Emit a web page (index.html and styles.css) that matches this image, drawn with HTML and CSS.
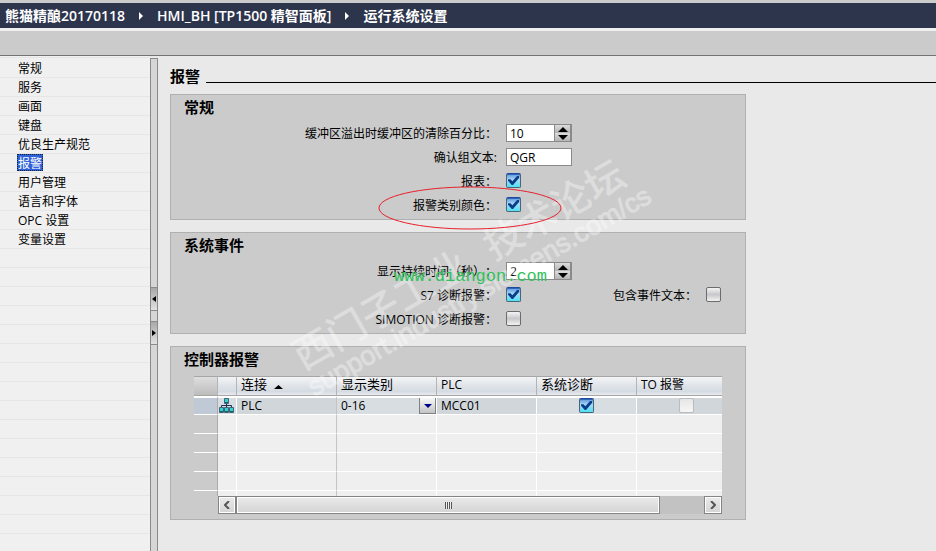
FILE: index.html
```html
<!DOCTYPE html>
<html lang="zh-CN">
<head>
    <meta charset="UTF-8">
    <meta name="viewport" content="width=device-width, initial-scale=1.0">
    <title>运行系统设置</title>
    <link rel="stylesheet" href="styles.css">
</head>
<body>
    <header class="breadcrumb">
        <span>熊猫精酿20170118</span>
        <i class="crumb-arrow"></i>
        <span>HMI_BH [TP1500 精智面板]</span>
        <i class="crumb-arrow"></i>
        <span>运行系统设置</span>
    </header>
    <div class="toolbar"></div>

    <div class="workspace">
        <nav class="sidebar">
            <a href="#">常规</a>
            <a href="#">服务</a>
            <a href="#">画面</a>
            <a href="#">键盘</a>
            <a href="#">优良生产规范</a>
            <a href="#" class="selected">报警</a>
            <a href="#">用户管理</a>
            <a href="#">语言和字体</a>
            <a href="#">OPC 设置</a>
            <a href="#">变量设置</a>
        </nav>

        <div class="splitter">
            <button class="split-btn" aria-label="折叠"><svg width="4" height="6"><path d="M4 0v6L0 3z"/></svg></button>
            <button class="split-btn" aria-label="展开"><svg width="4" height="6"><path d="M0 0v6l4-3z"/></svg></button>
        </div>

        <main class="content">
            <h1 class="page-title">报警</h1>

            <section class="panel">
                <h2>常规</h2>
                <div class="form">
                    <label for="buffer">缓冲区溢出时缓冲区的清除百分比：</label>
                    <div class="spin">
                        <input type="text" id="buffer" value="10">
                        <div class="spin-buttons">
                            <button aria-label="增加"><svg width="10" height="5"><path d="M0 5h10L5 0z"/></svg></button>
                            <button aria-label="减少"><svg width="10" height="5"><path d="M0 0h10L5 5z"/></svg></button>
                        </div>
                    </div>
                    <label for="group">确认组文本:</label>
                    <input type="text" id="group" class="text" value="QGR">
                    <label for="report">报表：</label>
                    <input type="checkbox" id="report" checked>
                    <label for="colors">报警类别颜色：</label>
                    <input type="checkbox" id="colors" checked>
                </div>
            </section>

            <section class="panel">
                <h2>系统事件</h2>
                <div class="form">
                    <label for="duration">显示持续时间（秒）：</label>
                    <div class="spin">
                        <input type="text" id="duration" value="2">
                        <div class="spin-buttons">
                            <button aria-label="增加"><svg width="10" height="5"><path d="M0 5h10L5 0z"/></svg></button>
                            <button aria-label="减少"><svg width="10" height="5"><path d="M0 0h10L5 5z"/></svg></button>
                        </div>
                    </div>
                    <label for="s7">S7 诊断报警：</label>
                    <input type="checkbox" id="s7" checked>
                    <label for="eventtext" class="second">包含事件文本：</label>
                    <input type="checkbox" id="eventtext">
                    <label for="simotion">SIMOTION 诊断报警：</label>
                    <input type="checkbox" id="simotion">
                </div>
            </section>

            <section class="panel">
                <h2>控制器报警</h2>
                <div class="grid">
                    <table>
                        <colgroup>
                            <col class="c-head"><col class="c-icon"><col class="c-wide"><col class="c-wide"><col class="c-wide"><col class="c-wide"><col>
                        </colgroup>
                        <thead>
                            <tr>
                                <th class="corner"></th>
                                <th></th>
                                <th>连接 <svg class="sort" width="9" height="4"><path d="M0 4h9L4.500 0z"/></svg></th>
                                <th>显示类别</th>
                                <th class="latin">PLC</th>
                                <th>系统诊断</th>
                                <th class="latin">TO 报警</th>
                            </tr>
                        </thead>
                        <tbody>
                            <tr class="active">
                                <td></td>
                                <td class="icon">
                                    <svg width="15" height="15" viewBox="0 0 15 15">
                                        <path d="M7.500 5v3M2.500 10V7.500h10V10M7.500 7v3" fill="none" stroke="#1b2a55"/>
                                        <path d="M5.500.5h4v5h-4zM.5 9.500h4v5h-4zM5.500 9.500h4v5h-4zM10.500 9.500h4v5h-4z" fill="#2fd3d3" stroke="#47636f"/>
                                        <path d="M6 4.500h3M1 13.500h3M6 13.500h3M11 13.500h3" stroke="#0c6478"/>
                                    </svg>
                                </td>
                                <td>PLC</td>
                                <td class="choice">
                                    <div class="dropdown">
                                        <select aria-label="显示类别"><option>0-16</option></select>
                                        <span class="drop-btn"><svg width="8" height="4"><path d="M0 0h8L4 4z"/></svg></span>
                                    </div>
                                </td>
                                <td>MCC01</td>
                                <td class="check"><input type="checkbox" aria-label="系统诊断" checked></td>
                                <td class="check"><input type="checkbox" aria-label="TO 报警" disabled></td>
                            </tr>
                            <tr><td></td><td></td><td></td><td></td><td></td><td></td><td></td></tr>
                            <tr><td></td><td></td><td></td><td></td><td></td><td></td><td></td></tr>
                            <tr><td></td><td></td><td></td><td></td><td></td><td></td><td></td></tr>
                            <tr><td></td><td></td><td></td><td></td><td></td><td></td><td></td></tr>
                            <tr class="last"><td></td><td></td><td></td><td></td><td></td><td></td><td></td></tr>
                        </tbody>
                    </table>
                    <div class="scrollbar">
                        <button aria-label="向左"><svg width="6" height="8"><path d="M5 0L1 4l4 4" fill="none" stroke="#555" stroke-width="2"/></svg></button>
                        <div class="track"><div class="thumb"><i class="grip"></i></div></div>
                        <button aria-label="向右"><svg width="6" height="8"><path d="M1 0l4 4-4 4" fill="none" stroke="#555" stroke-width="2"/></svg></button>
                    </div>
                </div>
            </section>
        </main>
    </div>

    <svg class="overlay" width="936" height="551">
        <g class="forum" transform="translate(303 371) rotate(-30)">
            <text class="forum-name" x="0" y="0">西门子工业</text>
            <text class="forum-name" x="220" y="0">技术论坛</text>
            <text class="forum-url" x="-3" y="28">support.industry.siemens.com/cs</text>
        </g>
        <text class="site" x="394" y="281">www.diangon.com</text>
        <ellipse cx="470" cy="208" rx="91" ry="21" fill="none" stroke="#e8202c"/>
    </svg>
</body>
</html>
```
FILE: styles.css
```css
* {
    margin: 0;
    padding: 0;
    box-sizing: border-box;
}

body {
    font-family: "Open Sans", "Noto Sans CJK SC", sans-serif;
    font-size: 12px;
    color: #000;
    background-color: #e9e9e9;
    min-height: 100vh;
    display: flex;
    flex-direction: column;
    overflow: hidden;
    text-spacing-trim: space-all;
}

input,
select,
button {
    font: inherit;
    color: inherit;
    border: none;
    border-radius: 0;
    appearance: none;
}

button {
    cursor: pointer;
}

svg {
    display: block;
}

/* top bars */
.breadcrumb {
    display: flex;
    align-items: center;
    gap: 14px;
    height: 31px;
    padding-left: 5px;
    background-color: #2d354d;
    border-top: 3px solid #cbcbcb;
    border-bottom: 3px solid #efefef;
    color: #fff;
    font-size: 14px;
    font-weight: 600;
    line-height: 24px;
    white-space: nowrap;
}

.crumb-arrow {
    border: 4px solid transparent;
    border-left-color: #fff;
    border-right-width: 0;
}

.toolbar {
    height: 25px;
    background-color: #cbcbcb;
    border-bottom: 1px solid #747474;
}

.workspace {
    flex: 1;
    display: flex;
}

/* left navigation */
.sidebar {
    width: 150px;
    padding: 3px 0 0 17px;
    display: flex;
    flex-direction: column;
    align-items: flex-start;
    gap: 2px;
    background: repeating-linear-gradient(#f0f0f0 0 18px, #e6e6e6 18px 19px) 0 3px;
}

.sidebar a {
    height: 17px;
    line-height: 19px;
    padding: 0 1px;
    color: #000;
    text-decoration: none;
}

.sidebar a.selected {
    background-color: #2f62d9;
    outline: 1px dotted #123;
    outline-offset: -1px;
    color: #fff;
}

.splitter {
    width: 8px;
    margin-top: 2px;
    padding-top: 22px;
    display: flex;
    flex-direction: column;
    justify-content: center;
    gap: 10px;
    background-color: #d6d6d6;
    border: 1px solid #8a8a8a;
    border-bottom: none;
}

.split-btn {
    height: 24px;
    display: flex;
    align-items: center;
    justify-content: center;
    background: linear-gradient(#a8a8a8, #e2e2e2);
    border: 1px solid #8a8a8a;
    border-width: 1px 0;
}

/* main area */
.content {
    flex: 1;
    padding: 8px 0 0 12px;
}

.page-title {
    display: flex;
    align-items: center;
    gap: 6px;
    height: 22px;
    margin-bottom: 8px;
    font-size: 15px;
}

.page-title::after {
    content: "";
    flex: 1;
    height: 1px;
    margin-top: 15px;
    background-color: #000;
}

.panel {
    max-width: 576px;
    margin-bottom: 12px;
    padding-bottom: 2px;
    background-color: #cbcbcb;
    border: 1px solid #b0b0b0;
}

.panel h2 {
    height: 26px;
    line-height: 24px;
    padding-left: 13px;
    font-size: 15px;
}

.form {
    display: grid;
    grid-template-columns: 325px 66px 116px 15px;
    grid-auto-rows: 24px;
    column-gap: 9px;
    padding-left: 1px;
    align-items: center;
}

.form label {
    grid-column: 1;
    text-align: right;
    white-space: nowrap;
}

.form label.second {
    grid-column: 3;
}

.text,
.spin {
    height: 18px;
    background-color: #fff;
    border: 1px solid #8a8a8a;
}

.text {
    width: 100%;
    padding: 0 3px;
}

.spin {
    display: flex;
}

.spin input {
    flex: 1;
    min-width: 0;
    padding: 0 3px;
    background-color: #fff;
}

.spin-buttons {
    width: 17px;
    display: flex;
    flex-direction: column;
    background-color: #d0d0d0;
    border: 1px solid #8a8a8a;
    border-width: 0 1px 0 1px;
}

.spin-buttons button {
    flex: 1;
    display: flex;
    align-items: center;
    justify-content: center;
    background: linear-gradient(#dcdcdc, #b4b4b4);
}

input[type="checkbox"] {
    display: block;
    position: relative;
    width: 15px;
    height: 15px;
    background: linear-gradient(#f4f4f4, #c8c8cc 50%, #f2f2f2);
    border: 1px solid #6c6c6c;
    border-radius: 2px;
}

input[type="checkbox"]:checked {
    background: linear-gradient(#5f94dc, #a5dcf6 45%, #4fe0f2);
    border-color: #1c4c98 #4b6478 #4b6478;
    box-shadow: inset 0 1px #2f66bc;
}

input[type="checkbox"]:checked::after {
    content: "";
    position: absolute;
    inset: 2px 1px;
    background-color: #0c3c8c;
    clip-path: polygon(0 35%, 22% 35%, 40% 58%, 82% 0, 100% 0, 100% 22%, 46% 100%, 34% 100%, 0 52%);
}

input[type="checkbox"]:disabled {
    background: linear-gradient(#e6e6e6, #f6f6f6);
    border-color: #bbb;
}

.form input[type="checkbox"] {
    margin-bottom: 1px;
}

/* controller alarms table */
.grid {
    margin: 3px 23px 3px 23px;
}

table {
    width: 100%;
    table-layout: fixed;
    border-collapse: separate;
    border-spacing: 0;
}

.c-head {
    width: 24px;
}

.c-icon {
    width: 19px;
}

.c-wide {
    width: 100px;
}

th {
    height: 20px;
    padding-left: 4px;
    background: linear-gradient(#f3f4f6, #dfe3e8 50%, #d5dbe2 80%, #e8ebee);
    border-top: 1px solid #a6a6a6;
    border-bottom: 1px solid #a6a6a6;
    border-right: 1px solid #b4b4b4;
    font-size: 13px;
    font-weight: normal;
    line-height: 14px;
    text-align: left;
    vertical-align: top;
    white-space: nowrap;
}

th.latin {
    font-size: 12px;
    line-height: 16px;
}

th.corner {
    background: linear-gradient(#dedede, #bdbdbd);
}

th:last-child {
    border-right: none;
}

.sort {
    display: inline-block;
    margin-left: 4px;
}

td {
    height: 19px;
    padding-left: 4px;
    background-color: #efefef;
    border-bottom: 1px solid #fff;
    border-right: 1px solid #fff;
    line-height: 17px;
}

td:nth-child(1) {
    background-color: #cbcbcb;
    border-right-color: #aaa;
}

td:nth-child(3) {
    border-right-color: #c4c4c4;
}

td:last-child {
    border-right: none;
}

.active td {
    background-color: #d8dde1;
    border-top: 2px solid #fff;
    line-height: 15px;
    vertical-align: top;
}

.active td:nth-child(odd) {
    background-color: #d0d6da;
}

.active td:nth-child(1) {
    background-color: #c0cad6;
}

.last td {
    height: 5px;
    border-bottom: none;
}

td.icon {
    padding-left: 1px;
}

td.choice {
    padding-left: 0;
}

td.check {
    padding-left: 0;
}

.check input {
    margin: 0 auto;
}

/* the last column is cut off, so its box keeps to a full column's centre */
.check:last-child input {
    margin: 0 0 0 42px;
}

.dropdown {
    display: grid;
    grid-template-columns: 1fr 17px;
    height: 16px;
}

.dropdown select {
    grid-area: 1 / 1 / 2 / 3;
    height: 15px;
    padding-left: 4px;
    background: none;
    line-height: 15px;
}

.drop-btn {
    grid-area: 1 / 2;
    display: flex;
    align-items: center;
    justify-content: center;
    background: linear-gradient(#f8f8f8, #c4c4c4);
    border: 1px solid #808080;
    border-top: none;
    fill: #00008b;
    pointer-events: none;
}

.scrollbar {
    display: flex;
    height: 18px;
    margin-left: 24px;
}

.scrollbar button {
    width: 18px;
    display: flex;
    align-items: center;
    justify-content: center;
}

.scrollbar button,
.thumb {
    background: linear-gradient(#eaeaea, #d4d4d4);
    border: 1px solid #848484;
    box-shadow: inset 0 0 0 1px #fff;
}

.track {
    flex: 1;
    padding-right: 44px;
    background-color: #c2c2c2;
}

.thumb {
    height: 18px;
    display: flex;
    align-items: center;
    justify-content: center;
}

.grip {
    width: 7px;
    height: 7px;
    background: repeating-linear-gradient(90deg, #555 0 1px, #eee 1px 2px);
}

/* marks lying over the page */
.overlay {
    position: absolute;
    top: 0;
    left: 0;
    pointer-events: none;
}

.forum {
    fill: #fff;
    opacity: 0.35;
}

.forum-name {
    font-family: "Noto Sans CJK SC", sans-serif;
    font-size: 39px;
    font-weight: 500;
}

.forum-url {
    font-family: "Liberation Sans", sans-serif;
    font-size: 27px;
    stroke: #fff;
}

.site {
    font-family: "Liberation Mono", monospace;
    font-size: 17px;
    fill: #2fc25c;
}
```
